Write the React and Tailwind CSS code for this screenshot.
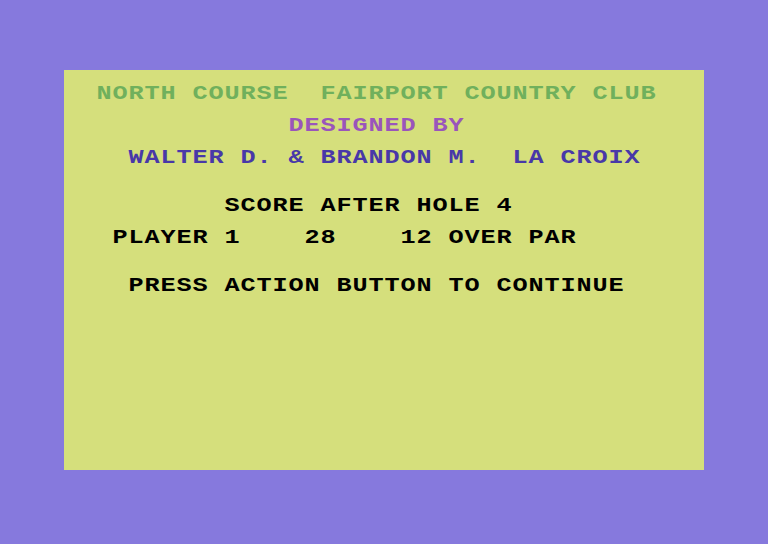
const LINES = [
  { text: '', color: '' },
  { text: '  NORTH COURSE  FAIRPORT COUNTRY CLUB', color: 'text-[#70b05c]' },
  { text: '', color: '' },
  { text: '              DESIGNED BY', color: 'text-[#9a55bb]' },
  { text: '', color: '' },
  { text: '    WALTER D. & BRANDON M.  LA CROIX', color: 'text-[#4838a8]' },
  { text: '', color: '' },
  { text: '', color: '' },
  { text: '          SCORE AFTER HOLE 4', color: 'text-black' },
  { text: '', color: '' },
  { text: '   PLAYER 1    28    12 OVER PAR', color: 'text-black' },
  { text: '', color: '' },
  { text: '', color: '' },
  { text: '    PRESS ACTION BUTTON TO CONTINUE', color: 'text-black' },
]

// one 16px cell per character, like the 40-column text screen
function Row({ text, color }) {
  return (
    <div className={`flex h-4 leading-4 text-[21px] font-bold ${color}`}>
      {[...text].map((ch, i) => (
        <span key={i} className="inline-block w-4 shrink-0 text-center scale-x-[1.2] whitespace-pre">
          {ch}
        </span>
      ))}
    </div>
  )
}

export default function App() {
  return (
    <div className="w-[768px] h-[544px] bg-[#8679dd] pt-[70px] pl-[64px]">
      <div
        className="w-[640px] h-[400px] bg-[#d5df7c] overflow-hidden"
        style={{ fontFamily: '"Liberation Mono", "DejaVu Sans Mono", monospace' }}
      >
        {LINES.map((line, i) => (
          <Row key={i} text={line.text} color={line.color} />
        ))}
      </div>
    </div>
  )
}
